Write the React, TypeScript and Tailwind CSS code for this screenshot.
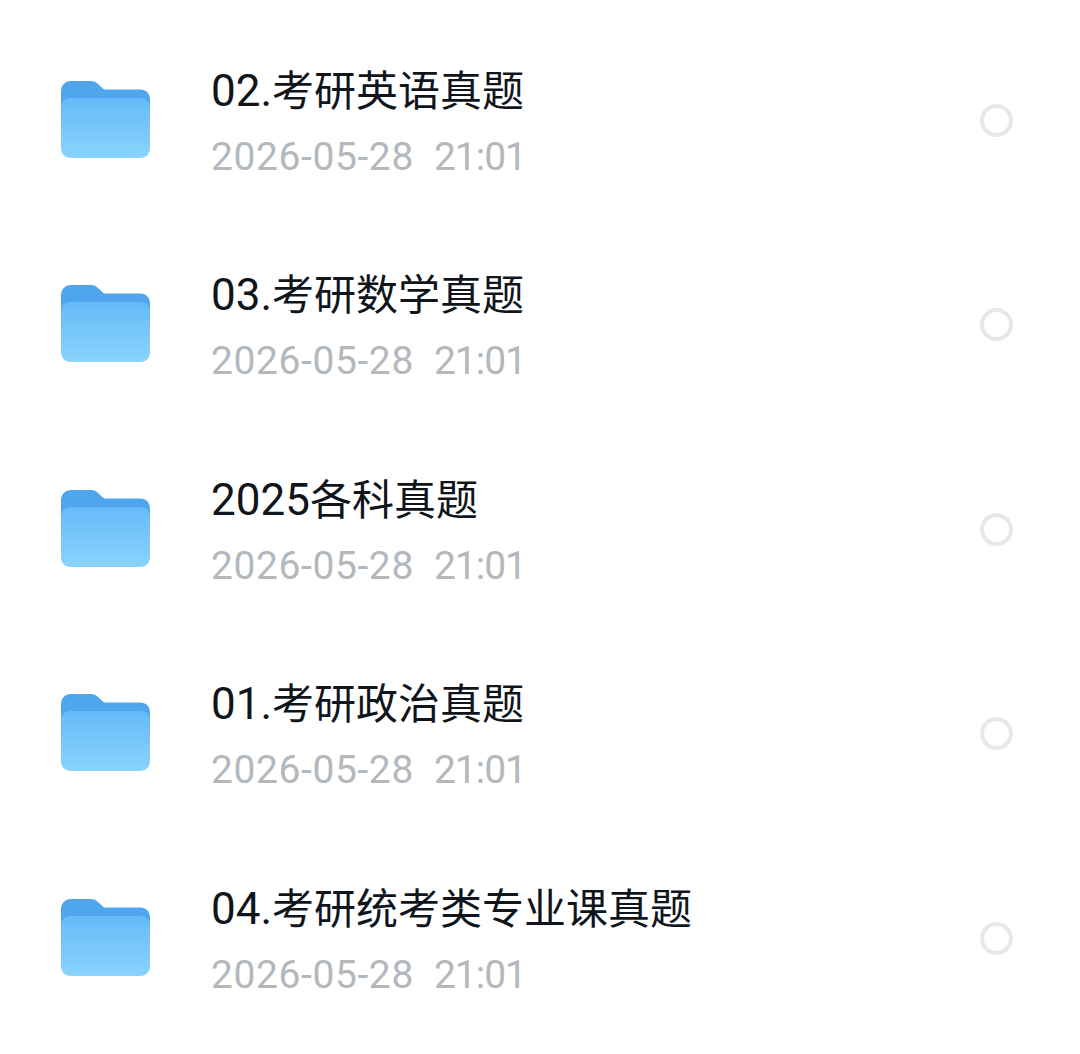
const folders = [
  { prefix: "02.", title: "考研英语真题" },
  { prefix: "03.", title: "考研数学真题" },
  { prefix: "2025", title: "各科真题" },
  { prefix: "01.", title: "考研政治真题" },
  { prefix: "04.", title: "考研统考类专业课真题" },
];

function FolderIcon() {
  return (
    <svg width="90" height="80" viewBox="0 0 90 80" className="mb-[1px] shrink-0">
      <defs>
        <linearGradient id="folderFront" x1="0" y1="0" x2="0" y2="1">
          <stop offset="0" stopColor="#66baf8" />
          <stop offset="1" stopColor="#8ad3fd" />
        </linearGradient>
      </defs>
      <path
        d="M0 12C0 5 4 1 10 1H30C33 1 35 2 37 4L43 9.5H79C85 9.5 89 13 89 20V40H0Z"
        fill="#4fa6ec"
      />
      <path
        d="M0 28C0 21 4 18 10 18H79C85 18 89 21 89 28V68C89 74 85 78 79 78H10C4 78 0 74 0 68Z"
        fill="url(#folderFront)"
      />
    </svg>
  );
}

function FolderRow({ prefix, title }: { prefix: string; title: string }) {
  return (
    <div className="flex h-[204.5px] items-center pl-[61px] pr-[67px]">
      <FolderIcon />
      <div className="ml-[60px] flex flex-1 flex-col pt-[7px]">
        <div className="text-[42px] leading-[50px] text-[#10151c]">
          <span className="text-[44px]">{prefix}</span>
          {title}
        </div>
        <div className="mt-[15px] text-[39px] leading-[50px] text-[#b3b8bd]">
          <span className="tracking-[0.6px]">2026-05-28</span>
          <span className="ml-[20px] tracking-[-1px]">21:01</span>
        </div>
      </div>
      <div className="size-[33px] rounded-full border-[4px] border-[#e8e8e8]" />
    </div>
  );
}

export default function App() {
  return (
    <div className="min-h-[1054px] bg-white pt-[18px] font-['Roboto','Noto_Sans_CJK_SC',sans-serif]">
      {folders.map((f) => (
        <FolderRow key={f.prefix} prefix={f.prefix} title={f.title} />
      ))}
    </div>
  );
}
